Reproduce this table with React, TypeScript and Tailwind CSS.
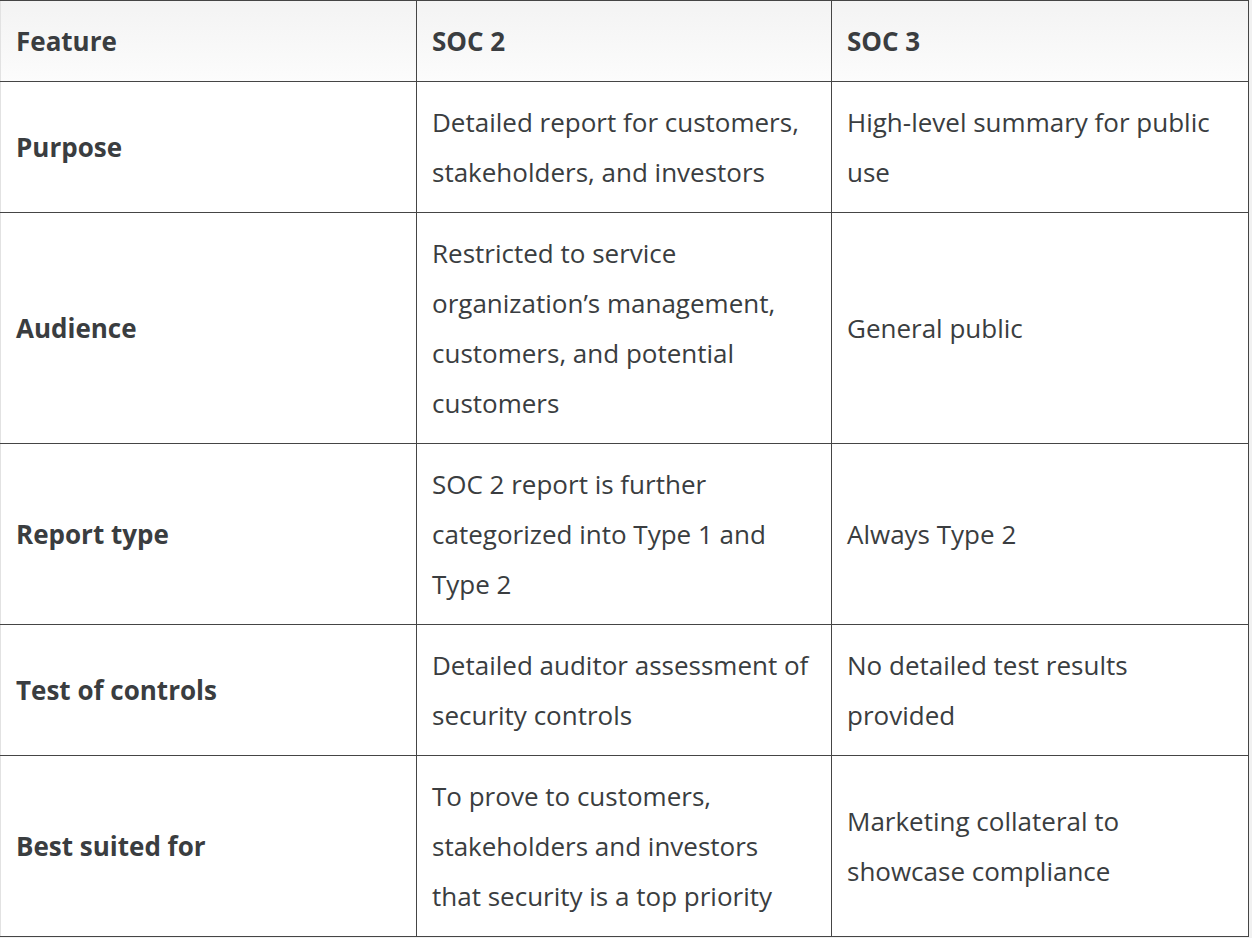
const rows: { label: string; soc2: string[]; soc3: string[] }[] = [
  {
    label: "Purpose",
    soc2: ["Detailed report for customers,", "stakeholders, and investors"],
    soc3: ["High-level summary for public", "use"],
  },
  {
    label: "Audience",
    soc2: [
      "Restricted to service",
      "organization’s management,",
      "customers, and potential",
      "customers",
    ],
    soc3: ["General public"],
  },
  {
    label: "Report type",
    soc2: ["SOC 2 report is further", "categorized into Type 1 and", "Type 2"],
    soc3: ["Always Type 2"],
  },
  {
    label: "Test of controls",
    soc2: ["Detailed auditor assessment of", "security controls"],
    soc3: ["No detailed test results", "provided"],
  },
  {
    label: "Best suited for",
    soc2: [
      "To prove to customers,",
      "stakeholders and investors",
      "that security is a top priority",
    ],
    soc3: ["Marketing collateral to", "showcase compliance"],
  },
];

const Lines = ({ lines }: { lines: string[] }) => (
  <>
    {lines.map((l, i) => (
      <div key={i} className="whitespace-nowrap">
        {l}
      </div>
    ))}
  </>
);

export default function App() {
  return (
    <div
      className="w-[1252px] h-[938px] bg-[#f1f1f1] overflow-hidden"
      style={{ fontFamily: '"Open Sans", "Noto Sans", sans-serif' }}
    >
      <table className="w-[1248px] table-fixed border-collapse bg-white text-[26px] leading-[50px] text-[#3a3d40]">
        <colgroup>
          <col className="w-[416px]" />
          <col className="w-[415px]" />
          <col className="w-[417px]" />
        </colgroup>
        <thead>
          <tr className="bg-linear-to-b from-[#f3f3f3] to-[#fcfcfc]">
            <th className="border border-[#454545] border-l-[#e2e2e2] pl-[15px] pr-2 py-[15px] text-left font-bold">
              Feature
            </th>
            <th className="border border-[#454545] pl-[15px] pr-2 py-[15px] text-left font-bold">
              SOC 2
            </th>
            <th className="border border-[#454545] pl-[15px] pr-2 py-[15px] text-left font-bold">
              SOC 3
            </th>
          </tr>
        </thead>
        <tbody>
          {rows.map((r) => (
            <tr key={r.label}>
              <td className="border border-[#454545] border-l-[#e2e2e2] pl-[15px] pr-2 py-[15px] align-middle font-bold">
                {r.label}
              </td>
              <td className="border border-[#454545] pl-[15px] pr-2 py-[15px] align-middle">
                <Lines lines={r.soc2} />
              </td>
              <td className="border border-[#454545] pl-[15px] pr-2 py-[15px] align-middle">
                <Lines lines={r.soc3} />
              </td>
            </tr>
          ))}
        </tbody>
      </table>
    </div>
  );
}
